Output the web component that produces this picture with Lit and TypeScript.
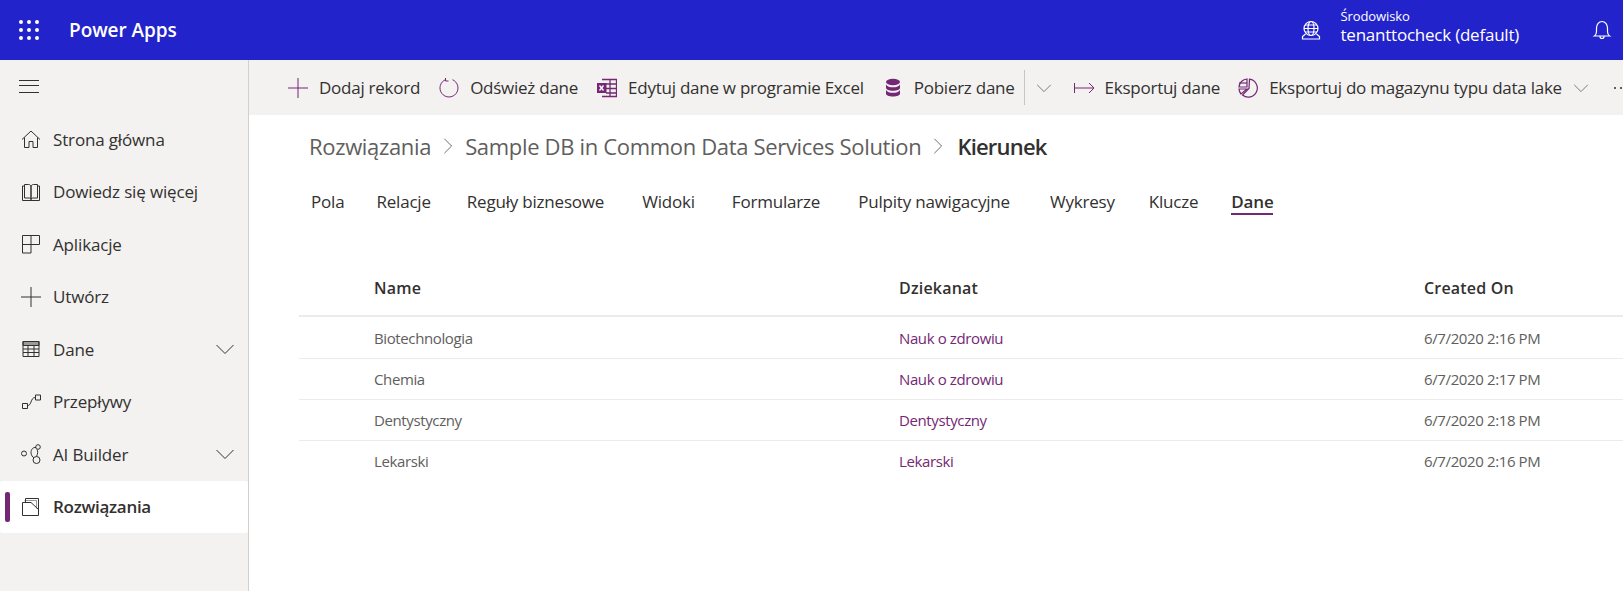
import { LitElement, html, css, svg } from 'lit';
import { customElement } from 'lit/decorators.js';

const icon = (body: unknown, size = 20) => html`
  <svg class="ico" width=${size} height=${size} viewBox="0 0 20 20" fill="none" stroke="currentColor" stroke-width="1">${body}</svg>
`;

const icons = {
  home: svg`<path d="M1 10.500 10 2l9 8.500M3.500 8.500v10h4.500v-6h4v6h4.500v-10"/>`,
  book: svg`<path d="M3.500 4H1.500v14.500h17V4h-2M3.500 2.500V16H8c1 0 2 .5 2 1.500V5c0-1.500-1-2.500-2.500-2.500zM16.500 2.500V16H12c-1 0-2 .5-2 1.500V5c0-1.500 1-2.500 2.500-2.500z"/>`,
  apps: svg`<path d="M1.500 1.500h17v9h-8.500v8.500H1.500zM1.500 10.500H10M10 1.500v9"/>`,
  plus: svg`<path d="M10 0v20M0 10h20"/>`,
  table: svg`<path d="M2 2.500h16v15H2zM2 6.500h16M2 10h16M2 13.500h16M7 6.500v11M13 6.500v11"/><path d="M2 2.500h16v4H2z" fill="currentColor" fill-opacity=".45"/>`,
  flow: svg`<path d="M1.500 11.500h5v5h-5zM14.500 3h5v5h-5zM6.500 13.500c2 0 2.500-1 3.500-3.500s1.500-4.500 4.500-4.500"/>`,
  ai: svg`<circle cx="3" cy="9.500" r="2.500"/><circle cx="17" cy="3" r="2.300"/><circle cx="15.500" cy="16" r="3.500"/><path d="M15 3.500c-3-.5-5 2-5 5 0 2.500 1.500 4.500 3 5.500"/><path d="M16 5.500c1 1.500 1 4-.5 7"/>`,
  solutions: svg`<path d="M4.500 5V1.500h13v17h-16v-13H10l7.500 7"/><path d="M4.500 2.500h12v8" stroke-opacity=".5" transform="translate(-1 1)"/>`,
  chevron: svg`<path d="m1.500 6 8.500 8.500L18.500 6"/>`,
  refresh: svg`<path d="M13.500 1.700a9 9 0 1 1-6.800-.1"/><path d="M6.500 0v3h3"/>`,
  excel: svg`<path d="M5 1.500h14.500v17H5M9 6h10.500M9 10.500h10.500M9 15h10.500M13 1.500v17" stroke-width="1.300"/><rect x="0" y="5" width="9.500" height="10" fill="currentColor" stroke="none"/><path d="m2.500 7.500 4 5M6.500 7.500l-4 5" stroke="#fff" stroke-width="1.400"/>`,
  db: svg`<g fill="currentColor" stroke="none"><ellipse cx="10" cy="4" rx="7" ry="3.200"/><path d="M3 6.500c1 2 4 2.800 7 2.800s6-.8 7-2.800v3.200c0 1.800-3 3-7 3s-7-1.200-7-3zM3 12c1 2 4 2.800 7 2.800s6-.8 7-2.800v3.500c0 1.800-3 3-7 3s-7-1.200-7-3z"/></g>`,
  exportIco: svg`<path d="M.5 5v10M.5 10H20M15 5l5 5-5 5"/>`,
  pie: svg`<path d="M11.500 1.200A9 9 0 1 1 4.500 17L11 10.500z" stroke-width="1.200"/><path d="M9 1v8H1a8.500 8.500 0 0 1 8-8zM1 11h8l-6 5a8.500 8.500 0 0 1-2-5z" stroke-width="1.200"/><path d="M1 5h8" stroke-width="1.200"/>`,
  globe: svg`<circle cx="10" cy="8.500" r="7"/><ellipse cx="10" cy="8.500" rx="3" ry="7"/><path d="M3 8.500h14M4 5h12M4 12h12M4.500 14 1.500 16.500v2.500h17v-2.500l-3-2.500"/>`,
  bell: svg`<path d="M2.500 16c1.500-1 2-2 2-4.500V8a5.500 6.500 0 0 1 11 0v3.500c0 2.500.5 3.500 2 4.500zM8 16.500a2 2 0 0 0 4 0"/>`,
  crumb: svg`<path d="m6 2 8 8-8 8"/>`,
};

const nav: [unknown, string, boolean?][] = [
  [icons.home, 'Strona główna'],
  [icons.book, 'Dowiedz się więcej'],
  [icons.apps, 'Aplikacje'],
  [icons.plus, 'Utwórz'],
  [icons.table, 'Dane', true],
  [icons.flow, 'Przepływy'],
  [icons.ai, 'AI Builder', true],
];

const commands: [unknown, string][] = [
  [icons.plus, 'Dodaj rekord'],
  [icons.refresh, 'Odśwież dane'],
  [icons.excel, 'Edytuj dane w programie Excel'],
];

const tabs: [string, number][] = [
  ['Pola', 32],
  ['Relacje', 36],
  ['Reguły biznesowe', 38],
  ['Widoki', 37],
  ['Formularze', 38],
  ['Pulpity nawigacyjne', 40],
  ['Wykresy', 34],
  ['Klucze', 33],
  ['Dane', 0],
];

const rows = [
  ['Biotechnologia', 'Nauk o zdrowiu', '6/7/2020 2:16 PM'],
  ['Chemia', 'Nauk o zdrowiu', '6/7/2020 2:17 PM'],
  ['Dentystyczny', 'Dentystyczny', '6/7/2020 2:18 PM'],
  ['Lekarski', 'Lekarski', '6/7/2020 2:16 PM'],
];

@customElement('app-root')
export class AppRoot extends LitElement {
  static styles = css`
    :host {
      display: block;
      width: 1623px;
      height: 591px;
      overflow: hidden;
      font-family: 'Open Sans', 'Noto Sans', sans-serif;
      color: #323130;
      background: #fff;
    }
    .ico { flex: none; display: block; }
    .top {
      height: 60px;
      background: #2323cc;
      color: #fff;
      display: flex;
      align-items: center;
    }
    .top .ico { stroke-width: 1.2; }
    .waffle {
      margin-left: 19px;
      display: grid;
      grid-template-columns: repeat(3, 4px);
      gap: 4px;
    }
    .waffle i { width: 4px; height: 4px; border-radius: 50%; background: #fff; }
    .brand { margin-left: 30px; font-size: 19px; font-weight: 600; letter-spacing: -0.05px; }
    .env { margin-left: auto; display: flex; align-items: center; }
    .env-text { margin-left: 20px; padding-bottom: 8px; display: flex; flex-direction: column; }
    .env-label { font-size: 13px; line-height: 18px; letter-spacing: -0.1px; }
    .env-name { font-size: 17px; line-height: 20px; letter-spacing: -0.23px; }
    .bell { margin: 0 11px 0 73px; }
    .body { display: flex; height: 531px; }
    .side {
      width: 248px;
      flex: none;
      background: #f3f2f1;
      border-right: 1px solid #d2d0ce;
    }
    .burger {
      height: 53px;
      display: flex;
      align-items: center;
      padding-left: 19px;
    }
    .burger span { display: block; width: 20px; height: 11px; border-top: 1px solid #323130; border-bottom: 1px solid #323130; position: relative; }
    .burger span::after { content: ''; position: absolute; left: 0; right: 0; top: 4px; height: 1px; background: #323130; }
    .item {
      height: 52.5px;
      display: flex;
      align-items: center;
      padding-left: 21px;
      font-size: 17px;
      letter-spacing: -0.15px;
    }
    .item .label { margin-left: 12px; }
    .item .chev { margin-left: auto; margin-right: 13px; }
    .item.active {
      background: #fff;
      font-weight: 600;
      letter-spacing: -0.3px;
      border-radius: 2px;
      position: relative;
    }
    .item.active::before {
      content: '';
      position: absolute;
      left: 5px;
      top: 11px;
      width: 5px;
      height: 30px;
      border-radius: 2px;
      background: #742774;
    }
    .main { flex: 1; min-width: 0; }
    .bar {
      height: 55px;
      background: #f3f2f1;
      display: flex;
      align-items: center;
      padding-left: 39px;
      white-space: nowrap;
      font-size: 17px;
      letter-spacing: -0.25px;
    }
    .cmd { display: flex; align-items: center; gap: 11px; margin-right: 19px; }
    .cmd .ico { color: #742774; }
    .cmd.data { margin-right: 9px; }
    .cmd.export { margin-right: 18px; }
    .sep { width: 1px; height: 35px; background: #c8c6c4; flex: none; }
    .cmd .mini .ico, .mini { color: #605e5c; }
    .drop { margin: 0 22px 0 11px; }
    .more { display: flex; gap: 4px; margin-left: 6px; }
    .more i { width: 2px; height: 2px; border-radius: 50%; background: #323130; }
    .crumbs {
      display: flex;
      align-items: center;
      padding: 15px 0 0 60px;
      height: 32px;
      font-size: 22px;
      letter-spacing: -0.33px;
      color: #605e5c;
    }
    .crumbs .ico { margin: 0 8px; color: #605e5c; }
    .crumbs b { margin-left: 2px; color: #323130; font-weight: 600; letter-spacing: -0.8px; }
    .tabs {
      display: flex;
      padding-left: 62px;
      margin-top: 29px;
      font-size: 17px;
      letter-spacing: -0.2px;
    }
    .tab { border-bottom: 2px solid transparent; line-height: 22px; }
    .tab.active { font-weight: 600; border-bottom-color: #742774; }
    .grid { margin: 44px 0 0 50px; }
    .row {
      display: grid;
      grid-template-columns: 525px 525px 1fr;
      padding-left: 75px;
      align-items: center;
      height: 40px;
      border-bottom: 1px solid #edebe9;
      font-size: 15px;
      letter-spacing: -0.38px;
      color: #605e5c;
    }
    .row.head {
      height: 54px;
      padding-top: 2px;
      margin-bottom: 1px;
      border-bottom: 2px solid #edebe9;
      font-size: 16px;
      font-weight: 600;
      letter-spacing: 0.2px;
      color: #323130;
    }
    .row.last { border-bottom: none; }
    .link { color: #742774; }
  `;

  render() {
    return html`
      <div class="top">
        <div class="waffle">${Array.from({ length: 9 }, () => html`<i></i>`)}</div>
        <div class="brand">Power Apps</div>
        <div class="env">
          ${icon(icons.globe)}
          <div class="env-text">
            <span class="env-label">Środowisko</span>
            <span class="env-name">tenanttocheck (default)</span>
          </div>
          <div class="bell">${icon(icons.bell)}</div>
        </div>
      </div>
      <div class="body">
        <aside class="side">
          <div class="burger"><span></span></div>
          <div>
            ${nav.map(
              ([ic, label, more]) => html`
                <div class="item">
                  ${icon(ic)}<span class="label">${label}</span>
                  ${more ? html`<span class="chev">${icon(icons.chevron)}</span>` : ''}
                </div>
              `
            )}
            <div class="item active">${icon(icons.solutions)}<span class="label">Rozwiązania</span></div>
          </div>
        </aside>
        <main class="main">
          <div class="bar">
            ${commands.map(([ic, label]) => html`<div class="cmd">${icon(ic)}<span>${label}</span></div>`)}
            <div class="cmd data">${icon(icons.db)}<span>Pobierz dane</span></div>
            <span class="sep"></span>
            <span class="mini drop">${icon(icons.chevron, 16)}</span>
            <div class="cmd export">${icon(icons.exportIco)}<span>Eksportuj dane</span></div>
            <div class="cmd">
              ${icon(icons.pie)}<span>Eksportuj do magazynu typu data lake</span>
              <span class="mini">${icon(icons.chevron, 16)}</span>
            </div>
            <div class="more"><i></i><i></i></div>
          </div>
          <div class="crumbs">
            <span>Rozwiązania</span>${icon(icons.crumb, 18)}
            <span>Sample DB in Common Data Services Solution</span>${icon(icons.crumb, 18)}
            <b>Kierunek</b>
          </div>
          <div class="tabs">
            ${tabs.map(
              ([t, gap]) => html`<div class="tab ${t === 'Dane' ? 'active' : ''}" style="margin-right:${gap}px">${t}</div>`
            )}
          </div>
          <div class="grid">
            <div class="row head"><span>Name</span><span>Dziekanat</span><span>Created On</span></div>
            ${rows.map(
              (r, i) => html`
                <div class="row ${i === rows.length - 1 ? 'last' : ''}">
                  <span>${r[0]}</span><span class="link">${r[1]}</span><span>${r[2]}</span>
                </div>
              `
            )}
          </div>
        </main>
      </div>
    `;
  }
}
